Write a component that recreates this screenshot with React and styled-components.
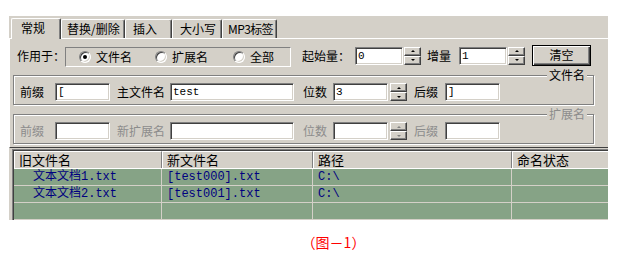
import React from 'react';
import styled, { createGlobalStyle } from 'styled-components';

const Global = createGlobalStyle`
  body {
    margin: 0;
    background: #fff;
    font-family: "Noto Sans CJK SC", sans-serif;
    font-size: 12px;
    color: #000;
  }
`;

const Page = styled.div`
  width: 624px;
  height: 273px;
  padding: 16px 0 0 9px;
  box-sizing: border-box;
`;

const Window = styled.div`
  width: 599px;
  height: 204px;
  background: #d4d0c8;
  overflow: hidden;
`;

const TabBar = styled.div`
  display: flex;
  align-items: flex-end;
  height: 22px;
  padding-left: 2px;
  box-sizing: border-box;
`;

const Tab = styled.div`
  position: relative;
  flex: 0 0 ${(p) => p.$w}px;
  height: ${(p) => (p.$active ? 21 : 19)}px;
  margin-bottom: ${(p) => (p.$active ? -1 : 0)}px;
  padding-left: ${(p) => p.$pad}px;
  box-sizing: border-box;
  background: #d4d0c8;
  border-top: 1px solid #fff;
  border-left: 1px solid #fff;
  border-right: 1px solid #404040;
  border-radius: 2px 2px 0 0;
  box-shadow: inset -1px 0 0 #808080;
  line-height: ${(p) => (p.$active ? 18 : 17)}px;
  font-size: 12px;
  letter-spacing: ${(p) => p.$ls || 0}px;
  white-space: nowrap;
  overflow: hidden;
  z-index: ${(p) => (p.$active ? 1 : 0)};
`;

const TabPage = styled.div`
  height: 110px;
  box-sizing: border-box;
  border-top: 1px solid #fff;
  border-left: 1px solid #fff;
  border-bottom: 1px solid #404040;
  padding-top: 6px;
`;

const Row = styled.div`
  display: flex;
  align-items: center;
  height: ${(p) => p.$h || 18}px;
  padding-left: ${(p) => p.$pl || 0}px;
`;

const Label = styled.span`
  flex: 0 0 ${(p) => p.$w}px;
  margin-left: ${(p) => p.$ml || 0}px;
  color: ${(p) => (p.$off ? '#8c8c8c' : '#000')};
  white-space: nowrap;
  font-size: 12px;
  line-height: 18px;
`;

const RadioBox = styled.div`
  display: flex;
  align-items: center;
  flex: 0 0 226px;
  height: 20px;
  margin-top: 2px;
  padding-left: 13px;
  box-sizing: border-box;
  border-top: 1px solid #808080;
  border-left: 1px solid #808080;
  border-bottom: 1px solid #fff;
  border-right: 1px solid #fff;
`;

const RadioOption = styled.label`
  display: flex;
  align-items: center;
  gap: 5px;
  flex: 0 0 ${(p) => p.$w}px;
`;

const RadioCircle = styled.span`
  display: flex;
  align-items: center;
  justify-content: center;
  width: 12px;
  height: 12px;
  box-sizing: border-box;
  border-radius: 50%;
  background: #fff;
  border: 1px solid;
  border-color: #808080 #fff #fff #808080;
  box-shadow: inset 1px 1px 0 #404040, inset -1px -1px 0 #d4d0c8;

  &::after {
    content: '';
    width: 4px;
    height: 4px;
    border-radius: 50%;
    background: ${(p) => (p.$on ? '#000' : 'transparent')};
  }
`;

const Input = styled.div`
  flex: 0 0 ${(p) => p.$w}px;
  height: 18px;
  margin-left: ${(p) => p.$ml || 0}px;
  box-sizing: border-box;
  background: #fff;
  border-top: 1px solid #808080;
  border-left: 1px solid #808080;
  border-bottom: 1px solid #fff;
  border-right: 1px solid #fff;
  box-shadow: inset 1px 1px 0 #404040, inset -1px -1px 0 #d4d0c8;
  padding-left: 2px;
  font-family: "Liberation Mono", monospace;
  font-size: 11px;
  line-height: 16px;
  color: #000;
`;

const Spinner = styled.div`
  display: flex;
  flex-direction: column;
  flex: 0 0 17px;
  height: 18px;
  margin-left: ${(p) => p.$ml || 1}px;
`;

const SpinButton = styled.div`
  display: flex;
  align-items: center;
  justify-content: center;
  height: 9px;
  box-sizing: border-box;
  background: #d4d0c8;
  border-top: 1px solid #fff;
  border-left: 1px solid #fff;
  border-right: 1px solid #404040;
  border-bottom: 1px solid #404040;
  box-shadow: inset -1px -1px 0 #808080;

  &::after {
    content: '';
    border-left: 2px solid transparent;
    border-right: 2px solid transparent;
    ${(p) => (p.$up ? 'border-bottom' : 'border-top')}: 2px solid ${(p) => (p.$off ? '#808080' : '#000')};
  }
`;

const PushButton = styled.div`
  flex: 0 0 59px;
  height: 21px;
  margin-left: ${(p) => p.$ml}px;
  box-sizing: border-box;
  border: 1px solid #000;
  background: #d4d0c8;
  box-shadow: inset 1px 1px 0 #fff, inset -1px -1px 0 #404040, inset -2px -2px 0 #808080;
  text-align: center;
  font-size: 12px;
  line-height: 18px;
`;

const Group = styled.fieldset`
  width: 581px;
  margin: 2px 0 0 3px;
  padding: 1px 0 3px 6px;
  box-sizing: border-box;
  border: 1px solid #808080;
  box-shadow: inset 1px 1px 0 #fff, 1px 1px 0 #fff;
  min-inline-size: 0;
`;

const Legend = styled.legend`
  margin-left: auto;
  margin-right: 6px;
  padding: 0 2px;
  background: #d4d0c8;
  font-size: 12px;
  line-height: 14px;
  color: ${(p) => (p.$off ? '#8c8c8c' : '#000')};
`;

const List = styled.div`
  width: 640px;
  margin: 1px 0 0 3px;
  border-top: 1px solid #808080;
  border-left: 1px solid #808080;
  box-shadow: inset 1px 1px 0 #404040;
  padding: 1px 0 0 1px;
  background: #86a386;
`;

const ListRow = styled.div`
  display: grid;
  grid-template-columns: 148px 151px 199px 140px;
  height: ${(p) => (p.$head ? 17 : 16)}px;
  border-bottom: 1px solid ${(p) => (p.$head ? '#fff' : '#d4d0c8')};
`;

const HeadCell = styled.div`
  box-sizing: border-box;
  background: #d4d0c8;
  border-top: 1px solid #fff;
  border-left: 1px solid #fff;
  border-right: 1px solid #808080;
  padding-left: ${(p) => p.$pl || 4}px;
  font-size: 13px;
  line-height: 15px;
  white-space: nowrap;
`;

const Cell = styled.div`
  box-sizing: border-box;
  border-right: 1px solid ${(p) => (p.$last ? 'transparent' : '#d4d0c8')};
  padding-left: ${(p) => p.$pl || 5}px;
  font-family: "Liberation Mono", "Noto Sans CJK SC", monospace;
  font-size: 12px;
  line-height: 16px;
  color: #000080;
  white-space: nowrap;
`;

const Caption = styled.div`
  margin-top: 13px;
  padding-left: 34px;
  text-align: center;
  color: #ff0000;
  font-size: 14px;
  line-height: 18px;
`;

const tabs = [
  { t: '常规', w: 50, pad: 9, active: true },
  { t: '替换/删除', w: 64, pad: 5 },
  { t: '插入', w: 47, pad: 7 },
  { t: '大小写', w: 50, pad: 7 },
  { t: 'MP3标签', w: 55, pad: 5, ls: -0.6 },
];

const rows = [
  ['文本文档1.txt', '[test000].txt', 'C:\\', ''],
  ['文本文档2.txt', '[test001].txt', 'C:\\', ''],
  ['', '', '', ''],
];

const Spin = ({ off, ml }) => (
  <Spinner $ml={ml}>
    <SpinButton $up $off={off} />
    <SpinButton $off={off} />
  </Spinner>
);

const NameRow = ({ off, main, values }) => (
  <Row>
    <Label $w={35} $off={off}>前缀</Label>
    <Input $w={55}>{values[0]}</Input>
    <Label $w={53} $ml={7} $off={off}>{main}</Label>
    <Input $w={124}>{values[1]}</Input>
    <Label $w={30} $ml={9} $off={off}>位数</Label>
    <Input $w={55}>{values[2]}</Input>
    <Spin off={off} ml={2} />
    <Label $w={31} $ml={7} $off={off}>后缀</Label>
    <Input $w={55}>{values[3]}</Input>
  </Row>
);

export default function App() {
  return (
    <Page>
      <Global />
      <Window>
        <TabBar>
          {tabs.map((tab) => (
            <Tab key={tab.t} $w={tab.w} $pad={tab.pad} $ls={tab.ls} $active={tab.active}>
              {tab.t}
            </Tab>
          ))}
        </TabBar>
        <TabPage>
          <Row $h={21} $pl={7}>
            <Label $w={46}>作用于：</Label>
            <RadioBox>
              <RadioOption $w={76}>
                <RadioCircle $on />
                文件名
              </RadioOption>
              <RadioOption $w={78}>
                <RadioCircle />
                扩展名
              </RadioOption>
              <RadioOption $w={50}>
                <RadioCircle />
                全部
              </RadioOption>
            </RadioBox>
            <Label $w={53} $ml={11}>起始量：</Label>
            <Input $w={48}>0</Input>
            <Spin />
            <Label $w={32} $ml={6}>增量</Label>
            <Input $w={48}>1</Input>
            <Spin />
            <PushButton $ml={7}>清空</PushButton>
          </Row>
          <Group>
            <Legend>文件名</Legend>
            <NameRow main="主文件名" values={['[', 'test', '3', ']']} />
          </Group>
          <Group>
            <Legend $off>扩展名</Legend>
            <NameRow off main="新扩展名" values={['', '', '', '']} />
          </Group>
        </TabPage>
        <List>
          <ListRow $head>
            <HeadCell>旧文件名</HeadCell>
            <HeadCell>新文件名</HeadCell>
            <HeadCell>路径</HeadCell>
            <HeadCell>命名状态</HeadCell>
          </ListRow>
          {rows.map((r, i) => (
            <ListRow key={i}>
              <Cell $pl={19}>{r[0]}</Cell>
              <Cell>{r[1]}</Cell>
              <Cell>{r[2]}</Cell>
              <Cell $last>{r[3]}</Cell>
            </ListRow>
          ))}
        </List>
      </Window>
      <Caption>（图－1）</Caption>
    </Page>
  );
}
